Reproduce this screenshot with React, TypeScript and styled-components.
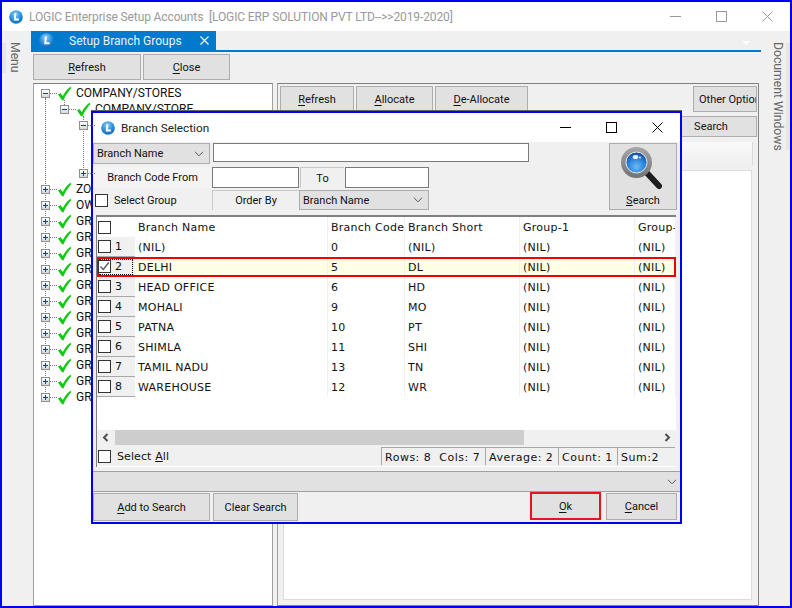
import React from 'react';
import styled, { createGlobalStyle } from 'styled-components';

type TreeNode = {
  label: string,
  level: number,
  open?: boolean,
  checked?: boolean,
}

const GlobalStyle = createGlobalStyle`
  html, body {
    margin: 0;
    padding: 0;
    background: #f0f0f0;
  }
  * {
    box-sizing: border-box;
  }
`;

const uiFont = `Roboto, "Noto Sans", sans-serif`;
const gridFont = `"DejaVu Sans", Verdana, sans-serif`;

const Frame = styled.div`
  position: relative;
  width: 792px;
  height: 608px;
  border: 2px solid #0000f0;
  background: #f0f0f0;
  font-family: ${uiFont};
  font-size: 12px;
  color: #111;
  display: flex;
  flex-direction: column;
  overflow: hidden;
`;

const TitleBar = styled.div`
  height: 29px;
  flex: none;
  background: #fff;
  display: flex;
  align-items: center;
  padding-left: 7px;
  color: #999;
  font-size: 12px;
  letter-spacing: -0.12px;
`;

const TitleText = styled.span`
  margin-left: 6px;
  white-space: pre;
  flex: 1;
`;

const WinButton = styled.div<{ $active?: boolean }>`
  width: 46px;
  height: 28px;
  display: flex;
  align-items: center;
  justify-content: center;
  color: ${(p) => (p.$active ? '#000' : '#999')};
`;

const Body = styled.div`
  flex: 1;
  min-height: 0;
  display: flex;
`;

const Rail = styled.div<{ $right?: boolean }>`
  width: 29px;
  flex: none;
  display: flex;
  flex-direction: ${(p) => (p.$right ? 'row-reverse' : 'row')};
  align-items: flex-start;
`;

const RailStrip = styled.div<{ $h: number }>`
  width: 4px;
  height: ${(p) => p.$h}px;
  margin-top: 12px;
  background: #e6e6e6;
`;

const RailText = styled.div`
  writing-mode: vertical-rl;
  margin: 11px 0 0 1px;
  font-size: 12.2px;
  line-height: 16px;
  white-space: nowrap;
  color: #666;
`;

const Workspace = styled.div`
  flex: 1;
  min-width: 0;
  display: flex;
  flex-direction: column;
`;

const TabStrip = styled.div`
  position: relative;
  height: 21px;
  flex: none;
  border-bottom: 2px solid #007acc;
  &::after {
    content: '';
    position: absolute;
    right: 11px;
    top: 10px;
    border-left: 4px solid transparent;
    border-right: 4px solid transparent;
    border-top: 4px solid #fff;
  }
`;

const Tab = styled.div`
  width: 185px;
  height: 19px;
  background: #007acc;
  color: #fff;
  display: flex;
  align-items: center;
  padding-left: 8px;
  font-size: 12px;
`;

const TabLabel = styled.span`
  margin-left: 15px;
  flex: 1;
  opacity: 0.92;
`;

const TabClose = styled.svg`
  width: 9px;
  height: 9px;
  margin-right: 7px;
`;

const Toolbar = styled.div`
  display: flex;
  gap: 2px;
  padding: 2px 0 0 2px;
  flex: none;
`;

const Button = styled.div<{ $w: number, $h?: number }>`
  width: ${(p) => p.$w}px;
  height: ${(p) => p.$h || 26}px;
  flex: none;
  background: #e1e1e1;
  border: 1px solid #adadad;
  display: flex;
  align-items: center;
  justify-content: center;
  white-space: nowrap;
  overflow: hidden;
  font-size: 11px;
  color: #111;
  u {
    text-underline-offset: 2px;
  }
`;

const ClippedButton = styled(Button)`
  margin-left: auto;
  justify-content: flex-start;
  padding-left: 5px;
`;

const Panels = styled.div`
  flex: 1;
  min-height: 0;
  display: flex;
  gap: 4px;
  margin: 3px 0 0 2px;
`;

const TreePanel = styled.div`
  width: 240px;
  flex: none;
  background: #fff;
  border: 1px solid #a0a0a0;
  border-top-color: #808080;
  overflow: hidden;
  font-size: 12px;
`;

const TreeRow = styled.div<{ $level: number }>`
  position: relative;
  height: 16px;
  display: flex;
  align-items: center;
  white-space: nowrap;
  padding-left: ${(p) => 7 + p.$level * 19}px;
`;

const VLine = styled.div<{ $left: number, $top: number, $h: number }>`
  position: absolute;
  left: ${(p) => p.$left}px;
  top: ${(p) => p.$top}px;
  height: ${(p) => p.$h}px;
  border-left: 1px dotted #777;
`;

const TreeArea = styled.div`
  position: relative;
  padding-top: 1px;
`;

const Expander = styled.div`
  position: relative;
  width: 9px;
  height: 9px;
  flex: none;
  border: 1px solid #8f8f8f;
  background: linear-gradient(#fff, #d8d8d8);
  z-index: 1;
  &::after {
    content: '';
    position: absolute;
    left: 8px;
    top: 3px;
    width: 7px;
    border-top: 1px dotted #777;
  }
`;

const ExpanderMark = styled.div<{ $open?: boolean }>`
  position: absolute;
  left: 1px;
  top: 3px;
  width: 5px;
  height: 1px;
  background: #1c3f75;
  &::after {
    content: '';
    display: ${(p) => (p.$open ? 'none' : 'block')};
    position: absolute;
    left: 2px;
    top: -2px;
    width: 1px;
    height: 5px;
    background: #1c3f75;
  }
`;

const TreeCheck = styled.svg`
  width: 15px;
  height: 15px;
  flex: none;
  margin: 0 4px 0 7px;
`;

const WorkPanel = styled.div`
  width: 482px;
  flex: none;
  border: 1px solid #808080;
  border-left-color: #a0a0a0;
  display: flex;
  flex-direction: column;
  padding: 2px 1px 5px 2px;
`;

const PanelBar = styled.div`
  display: flex;
  gap: 2px;
  flex: none;
`;

const PanelSearchRow = styled.div`
  display: flex;
  justify-content: flex-end;
  flex: none;
  margin-top: 4px;
`;

const PanelHeader = styled.div`
  height: 23px;
  flex: none;
  margin: 5px 4px 0 3px;
  background: linear-gradient(#fafafa, #efefef);
  border-right: 1px solid #d8d8d8;
`;

const PanelBox = styled.div`
  flex: 1;
  margin: 5px 5px 0 3px;
  background: #fff;
  border: 1px solid #dcdcdc;
`;

const Dialog = styled.div`
  position: absolute;
  left: 89px;
  top: 109px;
  width: 591px;
  height: 413px;
  border: 2px solid #0000f0;
  box-shadow: 0 -1px 0 #666;
  background: #f0f0f0;
  display: flex;
  flex-direction: column;
`;

const DialogTitle = styled.div`
  height: 29px;
  flex: none;
  background: #fff;
  display: flex;
  align-items: center;
  padding-left: 8px;
  font-size: 11.8px;
  color: #222;
`;

const DialogTitleText = styled.span`
  margin-left: 6px;
  flex: 1;
`;

const SearchForm = styled.div`
  display: flex;
  padding: 1px 3px 0 0;
  flex: none;
  height: 73px;
`;

const FormRows = styled.div`
  display: flex;
  flex-direction: column;
  width: 436px;
`;

const FormRow = styled.div<{ $h: number, $mt?: number }>`
  display: flex;
  height: ${(p) => p.$h}px;
  margin-top: ${(p) => p.$mt || 0}px;
  flex: none;
`;

const SelectBox = styled.div<{ $w: number, $h?: number }>`
  width: ${(p) => p.$w}px;
  height: ${(p) => p.$h || 21}px;
  flex: none;
  background: #e1e1e1;
  border: 1px solid #adadad;
  display: flex;
  align-items: center;
  justify-content: space-between;
  padding: 0 5px 0 3px;
  font-size: 11px;
`;

const TextInput = styled.div<{ $w: number, $h: number, $ml?: number }>`
  width: ${(p) => p.$w}px;
  height: ${(p) => p.$h}px;
  margin-left: ${(p) => p.$ml || 0}px;
  flex: none;
  background: #fff;
  border: 1px solid #7a7a7a;
`;

const FieldLabel = styled.div<{ $w: number, $ml?: number, $raised?: boolean }>`
  width: ${(p) => p.$w}px;
  margin-left: ${(p) => p.$ml || 0}px;
  flex: none;
  display: flex;
  align-items: center;
  justify-content: center;
  font-size: 11px;
  background: ${(p) => (p.$raised ? '#f0f0f0' : '#f4f4f4')};
  border-left: ${(p) => (p.$raised ? '1px solid #c8c8c8' : 'none')};
  border-top: ${(p) => (p.$raised ? '1px solid #c8c8c8' : 'none')};
`;

const CheckLabel = styled.label`
  width: 119px;
  display: flex;
  align-items: center;
  padding-left: 2px;
  font-size: 11px;
  flex: none;
`;

const Box = styled.span<{ $mr: number }>`
  position: relative;
  display: inline-block;
  width: 13px;
  height: 13px;
  margin-right: ${(p) => p.$mr}px;
  flex: none;
  border: 1px solid #333;
  background: #fff;
`;

const BoxTick = styled.svg`
  position: absolute;
  left: 0;
  top: 0;
  width: 11px;
  height: 11px;
`;

const SearchButton = styled.div`
  width: 68px;
  height: 67px;
  margin-left: auto;
  flex: none;
  background: #e1e1e1;
  border: 1px solid #adadad;
  display: flex;
  flex-direction: column;
  align-items: center;
  font-size: 11px;
  line-height: 14px;
`;

const SearchGlass = styled.svg`
  width: 46px;
  height: 46px;
  margin: 2px 0 2px;
`;

const GridWrap = styled.div`
  margin: 0 4px 0 3px;
  height: 252px;
  flex: none;
  border-top: 2px solid #808080;
  border-left: 1px solid #808080;
  display: flex;
  flex-direction: column;
  font-family: ${gridFont};
  font-size: 11px;
  letter-spacing: 0.25px;
  color: #111;
`;

const GridBody = styled.div`
  flex: 1;
  background: #fff;
`;

const GridRow = styled.div<{ $selected?: boolean }>`
  display: grid;
  grid-template-columns: 38px 193px 77px 115px 115px 41px;
  height: 20px;
  background: ${(p) => (p.$selected ? '#ffffe3' : '#fff')};
  outline: ${(p) => (p.$selected ? '2px solid #f00000' : 'none')};
  outline-offset: -2px;
  position: relative;
`;

const RowHead = styled.div<{ $blank?: boolean, $focus?: boolean }>`
  display: flex;
  align-items: center;
  padding-left: 1px;
  background: ${(p) => (p.$blank ? '#fff' : '#f0f0f0')};
  border-bottom: ${(p) => (p.$blank ? 'none' : '1px solid #a8a8a8')};
  outline: ${(p) => (p.$focus ? '1px dotted #000' : 'none')};
  outline-offset: -3px;
`;

const Cell = styled.div`
  display: flex;
  align-items: center;
  padding-left: 3px;
  white-space: nowrap;
  overflow: hidden;
  border-right: 1px solid #f0f0f0;
`;

const ScrollBar = styled.div`
  height: 15px;
  flex: none;
  display: flex;
  align-items: center;
  background: #f0f0f0;
`;

const ScrollArrow = styled.svg`
  width: 18px;
  height: 15px;
  flex: none;
`;

const ScrollThumb = styled.div`
  width: 409px;
  height: 15px;
  background: #cdcdcd;
  flex: none;
`;

const ScrollGap = styled.div`
  flex: 1;
`;

const StatusRow = styled.div`
  height: 22px;
  flex: none;
  display: flex;
  align-items: flex-start;
  padding: 2px 1px 0 1px;
  background: #f0f0f0;
  border-bottom: 1px solid #fff;
`;

const SelectAll = styled.div`
  display: flex;
  align-items: center;
  height: 14px;
  margin-top: 2px;
  flex: 1;
  letter-spacing: 0.1px;
`;

const StatusCell = styled.div<{ $w: number }>`
  width: ${(p) => p.$w}px;
  height: 18px;
  flex: none;
  border-top: 1px solid #a8a8a8;
  border-left: 1px solid #a8a8a8;
  display: flex;
  align-items: center;
  padding: 1px 0 0 3px;
  white-space: pre;
  overflow: hidden;
  letter-spacing: 0.5px;
`;

const CollapseBar = styled.div`
  height: 21px;
  flex: none;
  margin-top: 4px;
  background: #e1e1e1;
  border-top: 1px solid #a0a0a0;
  border-bottom: 1px solid #a0a0a0;
  display: flex;
  align-items: center;
  justify-content: flex-end;
  padding-right: 3px;
`;

const Chevron = styled.svg`
  width: 10px;
  height: 6px;
  flex: none;
`;

const DialogButtons = styled.div`
  display: flex;
  gap: 3px;
  flex: none;
  align-items: flex-start;
  padding-right: 3px;
  padding-top: 1px;
`;

const OkButton = styled(Button)`
  margin: -1px 2px 0 auto;
  border: 2px solid #e8141c;
`;

const CheckIcon = () => (
  <TreeCheck viewBox="0 0 15 15">
    <path d="M1 8.5 L3.5 7 L5.8 10 C7.5 6.5 10 3.5 13.5 0.8 L14.5 2 C11 5.5 8.5 9.5 6.5 14.2 L5 14.2 Z" fill="#12c912" />
  </TreeCheck>
);

const LogoIcon = ({ size }: { size: number }) => (
  <svg width={size} height={size} viewBox="0 0 14 14" style={{ flex: 'none' }}>
    <defs>
      <radialGradient id="logoBall" cx="45%" cy="30%" r="75%">
        <stop offset="0%" stopColor="#8fd0f5" />
        <stop offset="55%" stopColor="#2a8fdc" />
        <stop offset="100%" stopColor="#0d62b5" />
      </radialGradient>
    </defs>
    <circle cx="7" cy="7" r="6.8" fill="url(#logoBall)" />
    <path d="M5.4 3.2 H7.4 L6.8 8.6 H10 L9.8 10.4 H4.8 Z" fill="#fff" />
  </svg>
);

const Caret = () => (
  <Chevron viewBox="0 0 10 6">
    <path d="M1 0.8 L5 4.8 L9 0.8" stroke="#555" strokeWidth="1" fill="none" />
  </Chevron>
);

const TREE: Array<TreeNode> = [
  { label: 'COMPANY/STORES', level: 0, open: true, checked: true },
  { label: 'COMPANY/STORE', level: 1, open: true, checked: true },
  { label: '', level: 2, open: true },
  { label: '', level: -1 },
  { label: '', level: -1 },
  { label: '', level: 2 },
  { label: 'ZONE', level: 0, checked: true },
  { label: 'OWNER', level: 0, checked: true },
  ...Array.from({ length: 12 }, (_, i) => ({ label: `GROUP-${i + 1}`, level: 0, checked: true })),
];

const ROWS = [
  ['(NIL)', '0', '(NIL)'],
  ['DELHI', '5', 'DL'],
  ['HEAD OFFICE', '6', 'HD'],
  ['MOHALI', '9', 'MO'],
  ['PATNA', '10', 'PT'],
  ['SHIMLA', '11', 'SHI'],
  ['TAMIL NADU', '13', 'TN'],
  ['WAREHOUSE', '12', 'WR'],
];

export default function App() {
  return (
    <>
      <GlobalStyle />
      <Frame>
        <TitleBar>
          <LogoIcon size={14} />
          <TitleText>LOGIC Enterprise Setup Accounts  [LOGIC ERP SOLUTION PVT LTD--&gt;&gt;2019-2020]</TitleText>
          <WinButton>
            <svg width="11" height="11" viewBox="0 0 11 11"><path d="M0 5.5 H11" stroke="currentColor" /></svg>
          </WinButton>
          <WinButton>
            <svg width="11" height="11" viewBox="0 0 11 11"><rect x="0.5" y="0.5" width="10" height="10" fill="none" stroke="currentColor" /></svg>
          </WinButton>
          <WinButton>
            <svg width="11" height="11" viewBox="0 0 11 11"><path d="M0.5 0.5 L10.5 10.5 M10.5 0.5 L0.5 10.5" stroke="currentColor" /></svg>
          </WinButton>
        </TitleBar>
        <Body>
          <Rail>
            <RailStrip $h={30} />
            <RailText>Menu</RailText>
          </Rail>
          <Workspace>
            <TabStrip>
              <Tab>
                <LogoIcon size={15} />
                <TabLabel>Setup Branch Groups</TabLabel>
                <TabClose viewBox="0 0 9 9">
                  <path d="M0.5 0.5 L8.5 8.5 M8.5 0.5 L0.5 8.5" stroke="#fff" strokeWidth="1.1" />
                </TabClose>
              </Tab>
            </TabStrip>
            <Toolbar>
              <Button $w={108}><span><u>R</u>efresh</span></Button>
              <Button $w={87}><span><u>C</u>lose</span></Button>
            </Toolbar>
            <Panels>
              <TreePanel>
                <TreeArea>
                  <VLine $left={11} $top={14} $h={300} />
                  <VLine $left={30} $top={16} $h={5} />
                  <VLine $left={49} $top={32} $h={56} />
                  {TREE.map((node, i) => (
                    <TreeRow key={i} $level={Math.max(node.level, 0)}>
                      {node.level >= 0 && (
                        <Expander>
                          <ExpanderMark $open={node.open} />
                        </Expander>
                      )}
                      {node.checked && <CheckIcon />}
                      {node.label}
                    </TreeRow>
                  ))}
                </TreeArea>
              </TreePanel>
              <WorkPanel>
                <PanelBar>
                  <Button $w={74}><span><u>R</u>efresh</span></Button>
                  <Button $w={77}><span><u>A</u>llocate</span></Button>
                  <Button $w={93}><span><u>D</u>e-Allocate</span></Button>
                  <ClippedButton $w={64}>Other Options</ClippedButton>
                </PanelBar>
                <PanelSearchRow>
                  <Button $w={92} $h={21}>Search</Button>
                </PanelSearchRow>
                <PanelHeader />
                <PanelBox />
              </WorkPanel>
            </Panels>
          </Workspace>
          <Rail $right>
            <RailStrip $h={107} />
            <RailText>Document Windows</RailText>
          </Rail>
        </Body>

        <Dialog>
          <DialogTitle>
            <LogoIcon size={14} />
            <DialogTitleText>Branch Selection</DialogTitleText>
            <WinButton $active>
              <svg width="11" height="11" viewBox="0 0 11 11"><path d="M0 5.5 H11" stroke="currentColor" /></svg>
            </WinButton>
            <WinButton $active>
              <svg width="11" height="11" viewBox="0 0 11 11"><rect x="0.5" y="0.5" width="10" height="10" fill="none" stroke="currentColor" /></svg>
            </WinButton>
            <WinButton $active>
              <svg width="11" height="11" viewBox="0 0 11 11"><path d="M0.5 0.5 L10.5 10.5 M10.5 0.5 L0.5 10.5" stroke="currentColor" /></svg>
            </WinButton>
          </DialogTitle>
          <SearchForm>
            <FormRows>
              <FormRow $h={21}>
                <SelectBox $w={117}>Branch Name<Caret /></SelectBox>
                <TextInput $w={316} $h={19} $ml={3} />
              </FormRow>
              <FormRow $h={21} $mt={3}>
                <FieldLabel $w={119}>Branch Code From</FieldLabel>
                <TextInput $w={87} $h={21} />
                <FieldLabel $w={44} $ml={1} $raised>To</FieldLabel>
                <TextInput $w={84} $h={21} $ml={1} />
              </FormRow>
              <FormRow $h={20} $mt={2}>
                <CheckLabel><Box $mr={6} />Select Group</CheckLabel>
                <FieldLabel $w={87} $raised>Order By</FieldLabel>
                <SelectBox $w={130} $h={20}>Branch Name<Caret /></SelectBox>
              </FormRow>
            </FormRows>
            <SearchButton>
              <SearchGlass viewBox="0 0 46 46">
                <defs>
                  <radialGradient id="lens" cx="50%" cy="70%" r="65%">
                    <stop offset="0%" stopColor="#6db9f2" />
                    <stop offset="60%" stopColor="#2b84dc" />
                    <stop offset="100%" stopColor="#1250a8" />
                  </radialGradient>
                  <linearGradient id="ring" x1="0" y1="0" x2="0" y2="1">
                    <stop offset="0%" stopColor="#a6a6a6" />
                    <stop offset="100%" stopColor="#747474" />
                  </linearGradient>
                </defs>
                <path d="M27 27 L39 40" stroke="#1e1e1e" strokeWidth="6" strokeLinecap="round" />
                <circle cx="16.5" cy="16.5" r="15.5" fill="url(#ring)" />
                <circle cx="16.5" cy="16.5" r="10.5" fill="url(#lens)" stroke="#e8e8e8" strokeWidth="1" />
                <ellipse cx="15.5" cy="11" rx="2.8" ry="2" fill="#fff" opacity="0.9" />
                <circle cx="20" cy="11.5" r="1" fill="#fff" opacity="0.85" />
              </SearchGlass>
              <span><u>S</u>earch</span>
            </SearchButton>
          </SearchForm>
          <GridWrap>
            <GridBody>
              <GridRow>
                <RowHead $blank><Box $mr={0} /></RowHead>
                <Cell>Branch Name</Cell>
                <Cell>Branch Code</Cell>
                <Cell>Branch Short</Cell>
                <Cell>Group-1</Cell>
                <Cell>Group-2</Cell>
              </GridRow>
              {ROWS.map((row, i) => (
                <GridRow key={row[0]} $selected={i === 1}>
                  <RowHead $focus={i === 1}>
                    <Box $mr={4}>
                      {i === 1 && (
                        <BoxTick viewBox="0 0 11 11">
                          <path d="M1.5 5.5 L4.3 8.5 L9.8 1.5" stroke="#555" strokeWidth="1.3" fill="none" />
                        </BoxTick>
                      )}
                    </Box>
                    {i + 1}
                  </RowHead>
                  <Cell>{row[0]}</Cell>
                  <Cell>{row[1]}</Cell>
                  <Cell>{row[2]}</Cell>
                  <Cell>(NIL)</Cell>
                  <Cell>(NIL)</Cell>
                </GridRow>
              ))}
            </GridBody>
            <ScrollBar>
              <ScrollArrow viewBox="0 0 18 15">
                <path d="M10.5 4 L7 7.5 L10.5 11" stroke="#505050" strokeWidth="2" fill="none" />
              </ScrollArrow>
              <ScrollThumb />
              <ScrollGap />
              <ScrollArrow viewBox="0 0 18 15">
                <path d="M7.5 4 L11 7.5 L7.5 11" stroke="#505050" strokeWidth="2" fill="none" />
              </ScrollArrow>
            </ScrollBar>
            <StatusRow>
              <SelectAll><Box $mr={6} /><span>Select <u>A</u>ll</span></SelectAll>
              <StatusCell $w={104}>Rows: 8  Cols: 7</StatusCell>
              <StatusCell $w={73}>Average: 2</StatusCell>
              <StatusCell $w={59}>Count: 1</StatusCell>
              <StatusCell $w={58}>Sum:2</StatusCell>
            </StatusRow>
          </GridWrap>
          <CollapseBar><Caret /></CollapseBar>
          <DialogButtons>
            <Button $w={117} $h={28}><span><u>A</u>dd to Search</span></Button>
            <Button $w={85} $h={28}>Clear Search</Button>
            <OkButton $w={71} $h={28}><span><u>O</u>k</span></OkButton>
            <Button $w={71} $h={27}><span><u>C</u>ancel</span></Button>
          </DialogButtons>
        </Dialog>
      </Frame>
    </>
  );
}
